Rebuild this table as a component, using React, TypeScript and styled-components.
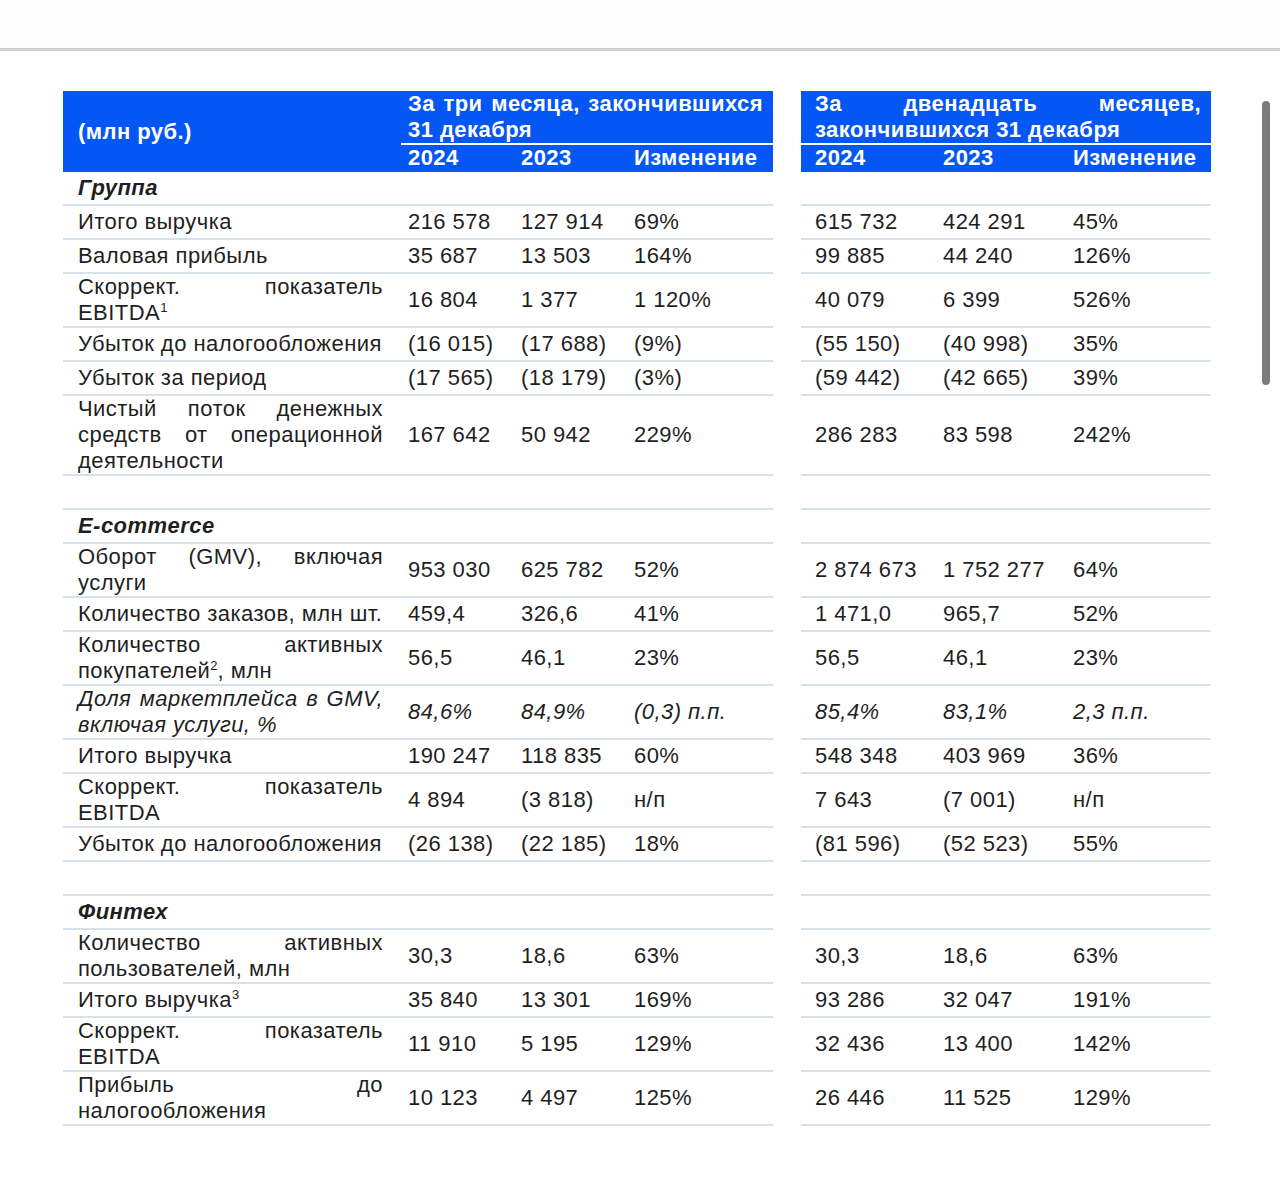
import React from "react";
import styled, { createGlobalStyle } from "styled-components";

const GlobalStyle = createGlobalStyle`
  body {
    margin: 0;
    background: #ffffff;
    font-family: "Liberation Sans", Arial, sans-serif;
    color: #1f1f1f;
  }
`;

const LEFT_COLS = "338px 113px 113px 146px";
const RIGHT_COLS = "128px 130px 152px";

type Row = {
  label?: React.ReactNode;
  q?: [string, string, string];
  y?: [string, string, string];
  kind?: "group" | "empty" | "italic";
};

const rows: Row[] = [
  { label: "Группа", kind: "group" },
  { label: "Итого выручка", q: ["216 578", "127 914", "69%"], y: ["615 732", "424 291", "45%"] },
  { label: "Валовая прибыль", q: ["35 687", "13 503", "164%"], y: ["99 885", "44 240", "126%"] },
  {
    label: (
      <>
        Скоррект. показатель EBITDA<sup>1</sup>
      </>
    ),
    q: ["16 804", "1 377", "1 120%"],
    y: ["40 079", "6 399", "526%"],
  },
  { label: "Убыток до налогообложения", q: ["(16 015)", "(17 688)", "(9%)"], y: ["(55 150)", "(40 998)", "35%"] },
  { label: "Убыток за период", q: ["(17 565)", "(18 179)", "(3%)"], y: ["(59 442)", "(42 665)", "39%"] },
  {
    label: "Чистый поток денежных средств от операционной деятельности",
    q: ["167 642", "50 942", "229%"],
    y: ["286 283", "83 598", "242%"],
  },
  { kind: "empty" },
  { label: "E-commerce", kind: "group" },
  { label: "Оборот (GMV), включая услуги", q: ["953 030", "625 782", "52%"], y: ["2 874 673", "1 752 277", "64%"] },
  { label: "Количество заказов, млн шт.", q: ["459,4", "326,6", "41%"], y: ["1 471,0", "965,7", "52%"] },
  {
    label: (
      <>
        Количество активных покупателей<sup>2</sup>, млн
      </>
    ),
    q: ["56,5", "46,1", "23%"],
    y: ["56,5", "46,1", "23%"],
  },
  {
    label: "Доля маркетплейса в GMV, включая услуги, %",
    q: ["84,6%", "84,9%", "(0,3) п.п."],
    y: ["85,4%", "83,1%", "2,3 п.п."],
    kind: "italic",
  },
  { label: "Итого выручка", q: ["190 247", "118 835", "60%"], y: ["548 348", "403 969", "36%"] },
  { label: "Скоррект. показатель EBITDA", q: ["4 894", "(3 818)", "н/п"], y: ["7 643", "(7 001)", "н/п"] },
  { label: "Убыток до налогообложения", q: ["(26 138)", "(22 185)", "18%"], y: ["(81 596)", "(52 523)", "55%"] },
  { kind: "empty" },
  { label: "Финтех", kind: "group" },
  { label: "Количество активных пользователей, млн", q: ["30,3", "18,6", "63%"], y: ["30,3", "18,6", "63%"] },
  {
    label: (
      <>
        Итого выручка<sup>3</sup>
      </>
    ),
    q: ["35 840", "13 301", "169%"],
    y: ["93 286", "32 047", "191%"],
  },
  { label: "Скоррект. показатель EBITDA", q: ["11 910", "5 195", "129%"], y: ["32 436", "13 400", "142%"] },
  { label: "Прибыль до налогообложения", q: ["10 123", "4 497", "125%"], y: ["26 446", "11 525", "129%"] },
];

const nb = (v: string) => v.replace(/ /g, "\u00a0");

const App = () => {
  return (
    <>
      <GlobalStyle />
      <TopBar />
      <Page>
        <TableRow>
          <HeadPart $cols={LEFT_COLS}>
            <UnitsCell>(млн руб.)</UnitsCell>
            <PeriodCell $pad={7} $span={3}>
              За три месяца, закончившихся 31 декабря
            </PeriodCell>
            <YearCell $pad={7}>2024</YearCell>
            <YearCell $pad={7}>2023</YearCell>
            <YearCell $pad={7}>Изменение</YearCell>
          </HeadPart>
          <HeadPart $cols={RIGHT_COLS}>
            <PeriodCell $pad={14} $span={3}>
              За двенадцать месяцев, закончившихся 31 декабря
            </PeriodCell>
            <YearCell $pad={14}>2024</YearCell>
            <YearCell $pad={14}>2023</YearCell>
            <YearCell $pad={14}>Изменение</YearCell>
          </HeadPart>
        </TableRow>
        {rows.map((r, i) => (
          <TableRow key={i}>
            <Part $cols={LEFT_COLS}>
              {r.kind === "group" ? (
                <GroupLabel>{r.label}</GroupLabel>
              ) : (
                <Label $italic={r.kind === "italic"}>{r.label}</Label>
              )}
              {(r.q ?? ["", "", ""]).map((v, j) => (
                <Value key={j} $pad={7} $italic={r.kind === "italic"}>
                  {nb(v)}
                </Value>
              ))}
            </Part>
            <Part $cols={RIGHT_COLS}>
              {(r.y ?? ["", "", ""]).map((v, j) => (
                <Value key={j} $pad={14} $italic={r.kind === "italic"}>
                  {nb(v)}
                </Value>
              ))}
            </Part>
          </TableRow>
        ))}
      </Page>
      <ScrollThumb />
    </>
  );
};

export default App;

const TopBar = styled.div`
  height: 48px;
  border-bottom: 3px solid #cfcfcf;
  background: #fdfdfd;
`;

const Page = styled.div`
  padding: 40px 0 40px 63px;
  display: flex;
  flex-direction: column;
`;

const TableRow = styled.div`
  display: flex;
  gap: 28px;
`;

const HeadPart = styled.div<{ $cols: string }>`
  display: grid;
  grid-template-columns: ${(p) => p.$cols};
  grid-template-rows: 54px 27px;
  background: #0457f5;
  color: #ffffff;
  font-weight: bold;
  font-size: 22px;
  letter-spacing: 0.45px;
  line-height: 26px;
`;

const UnitsCell = styled.div`
  grid-row: 1 / span 2;
  display: flex;
  align-items: center;
  padding-left: 15px;
`;

const PeriodCell = styled.div<{ $pad: number; $span: number }>`
  grid-column: span ${(p) => p.$span};
  padding: 0 10px 0 ${(p) => p.$pad}px;
  border-bottom: 2px solid #ffffff;
  text-align: justify;
  text-align-last: left;
`;

const YearCell = styled.div<{ $pad: number }>`
  padding-left: ${(p) => p.$pad}px;
  white-space: nowrap;
  line-height: 25px;
`;

const Part = styled.div<{ $cols: string }>`
  box-sizing: border-box;
  display: grid;
  grid-template-columns: ${(p) => p.$cols};
  align-items: center;
  min-height: 34px;
  border-bottom: 2px solid #d3e2ed;
  font-size: 22px;
  letter-spacing: 0.45px;
  line-height: 26px;
  sup {
    font-size: 13px;
    letter-spacing: 0;
    line-height: 0;
    vertical-align: 8px;
  }
`;

const Label = styled.div<{ $italic?: boolean }>`
  padding: 0 18px 0 15px;
  text-align: justify;
  text-align-last: left;
  font-style: ${(p) => (p.$italic ? "italic" : "normal")};
`;

const GroupLabel = styled.div`
  padding-left: 15px;
  font-weight: bold;
  font-style: italic;
`;

const Value = styled.div<{ $pad: number; $italic?: boolean }>`
  padding-left: ${(p) => p.$pad}px;
  white-space: nowrap;
  font-style: ${(p) => (p.$italic ? "italic" : "normal")};
`;

const ScrollThumb = styled.div`
  position: absolute;
  top: 101px;
  right: 10px;
  width: 8px;
  height: 284px;
  border-radius: 4px;
  background: #7b7b7b;
`;
